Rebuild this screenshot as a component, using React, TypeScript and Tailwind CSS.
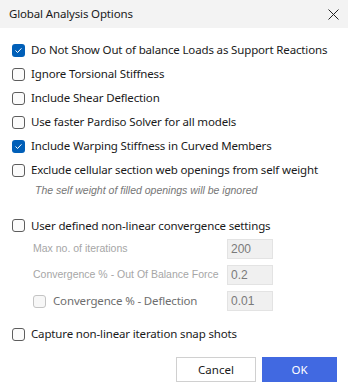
import { ReactNode } from 'react';

const Box = ({ checked, disabled }: { checked?: boolean; disabled?: boolean }) => {
  if (checked) {
    return (
      <span className="flex h-[13px] w-[13px] shrink-0 items-center justify-center rounded-[3px] bg-[#005fb8]">
        <svg width="9" height="9" viewBox="0 0 9 9" fill="none">
          <path d="M1.8 4.8 L3.6 6.5 L7.2 2.6" stroke="white" strokeWidth="1" strokeLinecap="round" strokeLinejoin="round" />
        </svg>
      </span>
    );
  }
  return (
    <span
      className={`h-[13px] w-[13px] shrink-0 rounded-[3px] border ${
        disabled ? 'border-[#c4c4c4] bg-[#f7f7f7]' : 'border-[#5d5d5d] bg-[#fbfbfb]'
      }`}
    />
  );
};

const Row = ({ checked, children }: { checked?: boolean; children: ReactNode }) => (
  <div className="flex h-[24px] items-center gap-[6px] pl-[12px]">
    <Box checked={checked} />
    <span className="whitespace-nowrap text-[11.5px] tracking-[-0.15px] text-[#1a1a1a]">{children}</span>
  </div>
);

const Field = ({ value }: { value: string }) => (
  <div className="ml-auto mr-[75px] flex h-[20px] w-[46px] shrink-0 items-center border border-[#e3e3e3] bg-[#f0f0f0] pl-[3px] font-['Liberation_Sans'] text-[12px] text-[#7a7a7a]">
    {value}
  </div>
);

export default function App() {
  return (
    <div className="h-[390px] w-[348px] bg-white font-['Noto_Sans',sans-serif]">
      <div className="flex h-[28px] items-center justify-between bg-[#f3f3f3] pl-[9px] pr-[9px]">
        <span className="text-[11.5px] tracking-[-0.15px] text-[#1a1a1a]">Global Analysis Options</span>
        <svg width="11" height="11" viewBox="0 0 11 11">
          <path d="M0.5 0.5 L10.5 10.5 M10.5 0.5 L0.5 10.5" stroke="#222" strokeWidth="1" />
        </svg>
      </div>

      <div className="pt-[10px]">
        <Row checked>Do Not Show Out of balance Loads as Support Reactions</Row>
        <Row>Ignore Torsional Stiffness</Row>
        <Row>Include Shear Deflection</Row>
        <Row>Use faster Pardiso Solver for all models</Row>
        <Row checked>Include Warping Stiffness in Curved Members</Row>
        <Row>Exclude cellular section web openings from self weight</Row>
        <div className="flex h-[18px] items-center pl-[35px] font-['Liberation_Sans'] text-[10.5px] italic text-[#767676]">
          The self weight of filled openings will be ignored
        </div>

        <div className="mt-[15px] flex h-[21px] items-center gap-[6px] pl-[12px]">
          <Box />
          <span className="whitespace-nowrap text-[11.5px] tracking-[-0.15px] text-[#1a1a1a]">
            User defined non-linear convergence settings
          </span>
        </div>

        <div className="flex h-[26px] items-center pl-[33px]">
          <span className="whitespace-nowrap font-['Liberation_Sans'] text-[10.5px] text-[#a6a6a6]">Max no. of iterations</span>
          <Field value="200" />
        </div>
        <div className="flex h-[26px] items-center pl-[33px]">
          <span className="whitespace-nowrap font-['Liberation_Sans'] text-[10.5px] text-[#a6a6a6]">
            Convergence % - Out Of Balance Force
          </span>
          <Field value="0.2" />
        </div>
        <div className="flex h-[26px] items-center gap-[7px] pl-[33px]">
          <Box disabled />
          <span className="whitespace-nowrap text-[11.5px] tracking-[-0.15px] text-[#6e6e6e]">Convergence % - Deflection</span>
          <Field value="0.01" />
        </div>

        <div className="mt-[8px]">
          <Row>Capture non-linear iteration snap shots</Row>
        </div>

        <div className="mt-[11px] flex justify-end gap-[6px] pr-[11px]">
          <button className="h-[25px] w-[80px] border border-[#d0d0d0] bg-white text-[11.5px] text-[#1a1a1a]">
            Cancel
          </button>
          <button className="h-[25px] w-[75px] bg-[#4169e1] text-[11.5px] text-white">OK</button>
        </div>
      </div>
    </div>
  );
}
